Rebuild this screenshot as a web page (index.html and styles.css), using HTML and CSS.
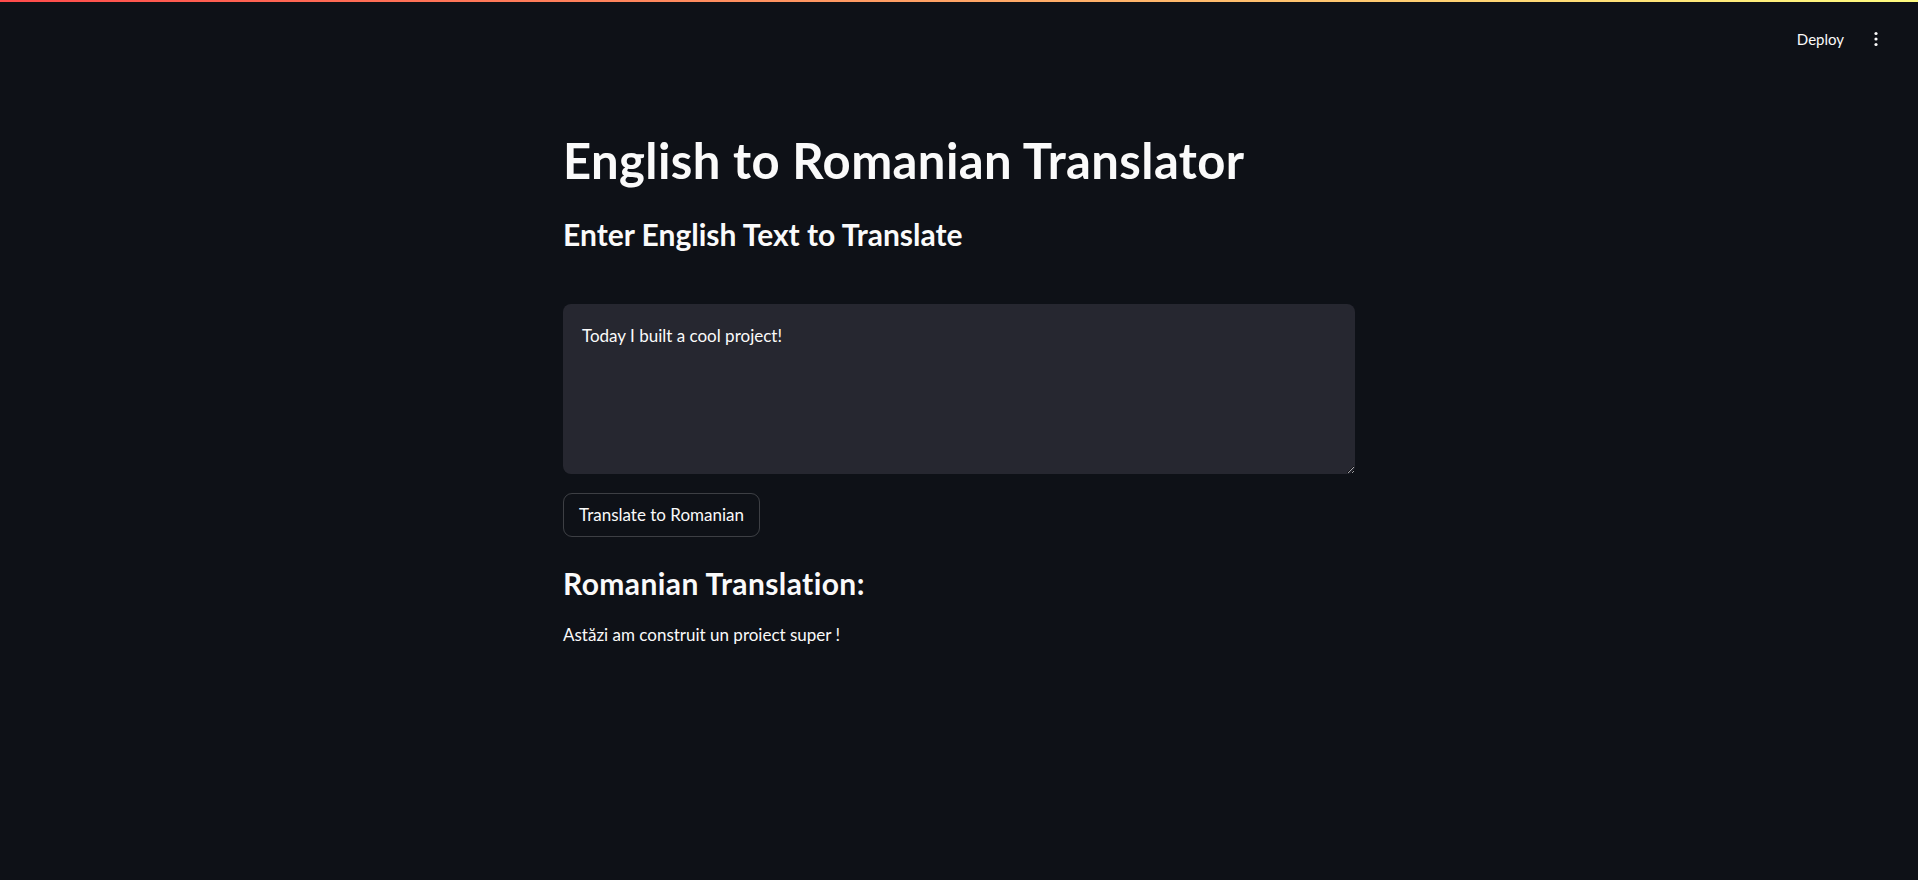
FILE: index.html
```html
<!DOCTYPE html>
<html lang="en">
<head>
<meta charset="utf-8">
<title>English to Romanian Translator</title>
<link rel="stylesheet" href="styles.css">
</head>
<body>
<div class="decoration"></div>
<header class="app-header">
  <button class="deploy">Deploy</button>
  <button class="menu" aria-label="Main menu">
    <svg width="16" height="16" viewBox="0 0 16 16"><circle cx="8" cy="2.5" r="1.6" fill="#fafafa"/><circle cx="8" cy="8" r="1.6" fill="#fafafa"/><circle cx="8" cy="13.5" r="1.6" fill="#fafafa"/></svg>
  </button>
</header>
<main class="block">
  <h1 class="title">English to Romanian Translator</h1>
  <h3 class="subheader">Enter English Text to Translate</h3>
  <textarea class="input" aria-label="English text">Today I built a cool project!</textarea>
  <button class="btn">Translate to Romanian</button>
  <h3 class="subheader result-head">Romanian Translation:</h3>
  <p class="result">Astăzi am construit un proiect super !</p>
</main>
</body>
</html>
```

FILE: styles.css
```css
html, body {
  margin: 0;
  padding: 0;
  background: #0e1117;
  color: #fafafa;
  font-family: Lato, "Noto Sans", sans-serif;
}
.decoration {
  height: 2px;
  background: linear-gradient(90deg, #ff4b4b, #fffd80);
}
.app-header {
  display: flex;
  justify-content: flex-end;
  align-items: center;
  height: 74px;
  padding-right: 34px;
  gap: 16px;
}
.deploy {
  background: transparent;
  border: none;
  color: #fafafa;
  font-family: inherit;
  font-size: 15px;
  padding: 6px 8px;
}
.menu {
  background: transparent;
  border: none;
  padding: 0;
  width: 16px;
  height: 16px;
  display: flex;
}
.block {
  width: 792px;
  margin: 0 auto;
  display: flex;
  flex-direction: column;
  align-items: flex-start;
  padding-top: 55px;
}
.title {
  font-size: 49px;
  font-weight: 700;
  letter-spacing: 0.4px;
  line-height: 1.2;
  margin: 0;
}
.subheader {
  font-size: 30px;
  font-weight: 700;
  line-height: 1.2;
  margin: 26px 0 0;
}
.input {
  box-sizing: border-box;
  width: 100%;
  height: 170px;
  margin-top: 52px;
  background: #262730;
  color: #fafafa;
  border: none;
  border-radius: 8px;
  padding: 20px 19px 18px;
  font-family: inherit;
  font-size: 17px;
  line-height: 1.4;
  resize: vertical;
  outline: none;
}
.btn {
  box-sizing: border-box;
  margin-top: 19px;
  height: 44px;
  padding: 0 15px;
  background: transparent;
  color: #fafafa;
  border: 1px solid rgba(250, 250, 250, 0.2);
  border-radius: 9px;
  font-family: inherit;
  font-size: 17px;
}
.result-head {
  margin-top: 28px;
  letter-spacing: 0.4px;
}
.result {
  margin: 20px 0 0;
  font-size: 17px;
  line-height: 1.6;
}
```
